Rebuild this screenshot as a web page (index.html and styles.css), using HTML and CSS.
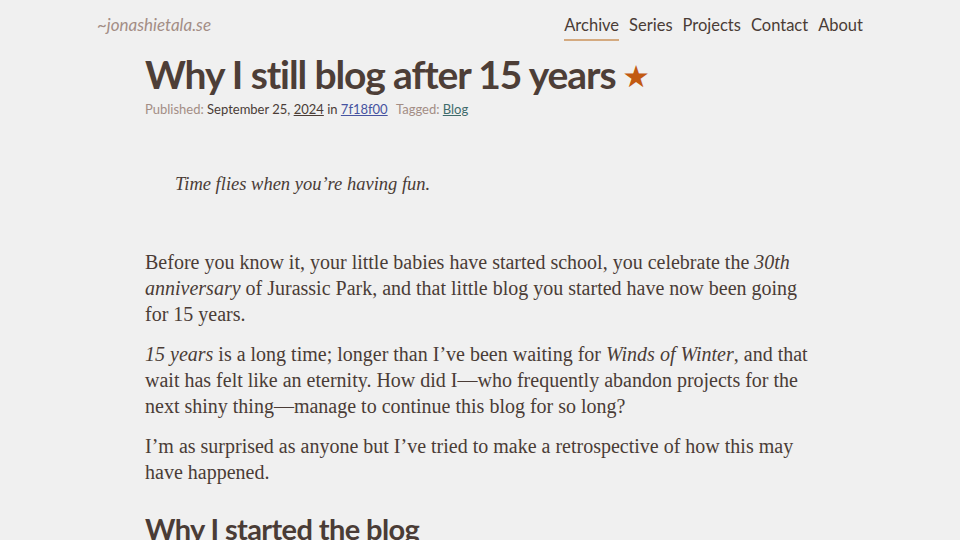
FILE: index.html
```html
<!DOCTYPE html>
<html lang="en">

<head>
    <meta charset="UTF-8">
    <meta name="viewport" content="width=device-width, initial-scale=1.0">
    <title>Why I still blog after 15 years - jonashietala.se</title>
    <link rel="stylesheet" href="styles.css">
</head>

<body>

    <header class="site-header">
        <a class="logo" href="/">~jonashietala.se</a>
        <nav class="main-nav">
            <a href="/archive" class="current">Archive</a>
            <a href="/series">Series</a>
            <a href="/projects">Projects</a>
            <a href="/contact">Contact</a>
            <a href="/about">About</a>
        </nav>
    </header>

    <main class="post">
        <h1 class="post-title">Why I still blog after 15 years <span class="star">★</span></h1>
        <div class="post-meta">
            <span class="label">Published:</span> September 25, <a href="/archive/2024" class="year">2024</a>
            in <a href="#" class="rev">7f18f00</a>
            <span class="label tagged">Tagged:</span> <a href="/blog/tags/blog" class="tag">Blog</a>
        </div>

        <blockquote class="epigraph">
            <p>Time flies when you’re having fun.</p>
        </blockquote>

        <p>Before you know it, your little babies have started school, you celebrate the <em>30th anniversary</em> of Jurassic Park, and that little blog you started have now been going for 15 years.</p>
        <p><em>15 years</em> is a long time; longer than I’ve been waiting for <em>Winds of Winter</em>, and that wait has felt like an eternity. How did I—who frequently abandon projects for the next shiny thing—manage to continue this blog for so long?</p>
        <p>I’m as surprised as anyone but I’ve tried to make a retrospective of how this may have happened.</p>

        <h2>Why I started the blog</h2>
    </main>

</body>

</html>
```

FILE: styles.css
```css
body {
    margin: 0;
    background-color: #f0f0f0;
    color: #4a3c36;
    font-family: "Liberation Serif", Georgia, serif;
}

a {
    color: inherit;
}

.site-header {
    max-width: 766px;
    margin: 0 auto;
    padding: 14px 0 0;
    display: flex;
    justify-content: space-between;
    align-items: baseline;
    font-family: Lato, sans-serif;
}

.logo {
    font-size: 17px;
    font-style: italic;
    color: #a38d85;
    text-decoration: none;
}

.main-nav {
    display: flex;
    gap: 10px;
}

.main-nav a {
    font-size: 16.5px;
    color: #4a3c36;
    text-decoration: none;
    padding-bottom: 4px;
}

.main-nav a.current {
    border-bottom: 2px solid #d4aa80;
}

.post {
    max-width: 670px;
    margin: 0 auto;
    font-size: 20px;
    line-height: 26px;
}

.post-title {
    font-family: Lato, sans-serif;
    font-size: 39px;
    line-height: 48px;
    font-weight: 700;
    letter-spacing: -1.1px;
    margin: 9px 0 0;
    color: #4d3e37;
}

.star {
    color: #c25a12;
    font-size: 27px;
    letter-spacing: 0;
    vertical-align: 3px;
}

.post-meta {
    font-family: Lato, sans-serif;
    font-size: 13px;
    line-height: 18px;
    color: #4a3c36;
}

.post-meta .label {
    color: #a38d85;
}

.post-meta .tagged {
    margin-left: 5px;
}

.post-meta .rev {
    color: #4653a0;
}

.post-meta .tag {
    color: #3f6b6b;
}

.epigraph {
    margin: 53px 0 52px 30px;
    font-style: italic;
    font-size: 18.5px;
}

.post p {
    margin: 0 0 14px;
}

.post h2 {
    font-family: Lato, sans-serif;
    font-size: 29px;
    font-weight: 700;
    letter-spacing: -0.6px;
    margin: 31px 0 0;
}
```
